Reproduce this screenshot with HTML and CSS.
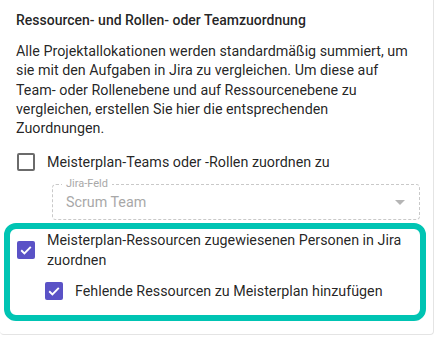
FILE: index.html
```html
<!doctype html>
<html>
<head>
<meta charset="utf-8">
<title>Zuordnung</title>
<link rel="stylesheet" href="styles.css">
</head>
<body>
<div class="card">
  <h3 class="title">Ressourcen- und Rollen- oder Teamzuordnung</h3>
  <p class="intro">Alle Projektallokationen werden standardmäßig summiert, um sie mit den Aufgaben in Jira zu vergleichen. Um diese auf Team- oder Rollenebene und auf Ressourcenebene zu vergleichen, erstellen Sie hier die entsprechenden Zuordnungen.</p>

  <label class="row">
    <span class="box"></span>
    <span class="text">Meisterplan-Teams oder -Rollen zuordnen zu</span>
  </label>

  <div class="field">
    <span class="legend">Jira-Feld</span>
    <span class="value">Scrum Team</span>
    <span class="arrow"></span>
  </div>

  <div class="highlight">
    <label class="row">
      <span class="box checked">
        <svg viewBox="0 0 18 18" width="18" height="18"><path d="M4.2 9.3l3.2 3.1 6.4-6.5" fill="none" stroke="#fff" stroke-width="1.9"/></svg>
      </span>
      <span class="text">Meisterplan-Ressourcen zugewiesenen Personen in Jira zuordnen</span>
    </label>
    <label class="row sub">
      <span class="box checked">
        <svg viewBox="0 0 18 18" width="18" height="18"><path d="M4.2 9.3l3.2 3.1 6.4-6.5" fill="none" stroke="#fff" stroke-width="1.9"/></svg>
      </span>
      <span class="text">Fehlende Ressourcen zu Meisterplan hinzufügen</span>
    </label>
  </div>
</div>
</body>
</html>
```

FILE: styles.css
```css
body{
margin:0;
background:#fff;
font-family:Roboto,"Noto Sans",sans-serif;
color:rgba(0,0,0,0.87);
}
.card{
width:434px;
height:335px;
box-sizing:border-box;
border-right:1px solid #e4e4e4;
border-bottom:1px solid #e4e4e4;
border-bottom-right-radius:4px;
border-bottom-left-radius:4px;
padding-top:10px;
}
.title{
margin:0 0 12px 16px;
font-size:14px;
font-weight:500;
line-height:20px;
}
.intro{
margin:0 16px 14px 16px;
font-size:14.3px;
line-height:19.3px;
}
.row{
display:flex;
align-items:flex-start;
margin-left:17px;
}
.box{
flex:none;
width:18px;
height:18px;
box-sizing:border-box;
border:2px solid #6b6b6b;
border-radius:2px;
margin-right:12px;
}
.box.checked{
border:none;
background:#5a52c6;
}
.box svg{
display:block;
}
.text{
font-size:14.3px;
line-height:20px;
}
.row .box{
margin-top:1px;
}
.field{
position:relative;
margin:12px 13px 0 52px;
height:36px;
box-sizing:border-box;
border:1px dashed #c9c9c9;
border-radius:4px;
}
.legend{
position:absolute;
left:9px;
top:-8px;
padding:0 4px;
background:#fff;
font-size:11px;
line-height:14px;
color:#a8a8a8;
}
.value{
position:absolute;
left:13px;
top:8px;
font-size:14.3px;
line-height:18px;
color:#a8a8a8;
}
.arrow{
position:absolute;
right:14px;
top:15px;
border-left:5px solid transparent;
border-right:5px solid transparent;
border-top:5px solid #b5b5b5;
}
.highlight{
margin:3px 7px 0 4px;
border:6px solid #00c4b3;
border-radius:12px;
padding:1px 0 14px 0;
}
.highlight .row{
margin-left:7px;
}
.highlight .row .box{
margin-top:11px;
}
.highlight .row.sub{
margin-left:35px;
margin-top:11px;
}
.highlight .row.sub .box{
margin-top:1px;
}
.highlight .text{
padding-right:12px;
}
```
